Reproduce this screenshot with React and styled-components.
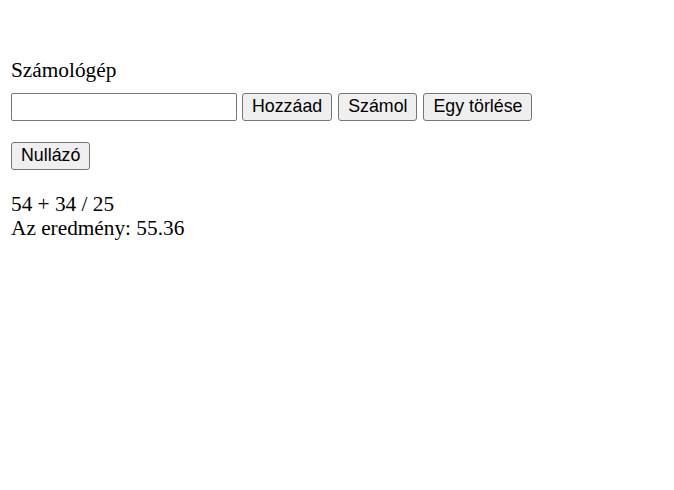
import React, { useState } from "react";
import styled, { createGlobalStyle } from "styled-components";

const GlobalStyle = createGlobalStyle`
  html, body {
    margin: 0;
    padding: 0;
    background: #ffffff;
  }
  body {
    font-family: "Liberation Serif", "Times New Roman", serif;
    font-size: 21.3px;
    color: #000000;
  }
`;

const Page = styled.div`
  padding: 58px 11px 0;
  display: flex;
  flex-direction: column;
`;

const Title = styled.div`
  line-height: 24px;
  height: 24px;
`;

const Row = styled.div`
  display: flex;
  align-items: center;
  gap: 6px;
  margin-top: ${(p) => p.$top || 0}px;
`;

const Input = styled.input`
  box-sizing: border-box;
  width: 226px;
  height: 28px;
  margin: 0 -1px 0 0;
  padding: 1px 3px;
  border: 1px solid #767676;
  border-radius: 2px;
  font-family: "Liberation Sans", Arial, sans-serif;
  font-size: 17.8px;
  background: #ffffff;
  outline: none;
`;

const Button = styled.button`
  box-sizing: border-box;
  height: 28px;
  margin: 0;
  padding: 0 9px;
  border: 1px solid #767676;
  border-radius: 3px;
  background: #efefef;
  color: #000000;
  font-family: "Liberation Sans", Arial, sans-serif;
  font-size: 17.8px;
  line-height: 1;
  cursor: pointer;
`;

const Output = styled.div`
  margin-top: 22px;
  line-height: 24px;
`;

export default function App() {
  const [value, setValue] = useState("");

  return (
    <>
      <GlobalStyle />
      <Page>
        <Title>Számológép</Title>
        <Row $top={11}>
          <Input
            type="text"
            value={value}
            onChange={(e) => setValue(e.target.value)}
          />
          <Button>Hozzáad</Button>
          <Button>Számol</Button>
          <Button>Egy törlése</Button>
        </Row>
        <Row $top={21}>
          <Button>Nullázó</Button>
        </Row>
        <Output>
          <div>54 + 34 / 25</div>
          <div>Az eredmény: 55.36</div>
        </Output>
      </Page>
    </>
  );
}
